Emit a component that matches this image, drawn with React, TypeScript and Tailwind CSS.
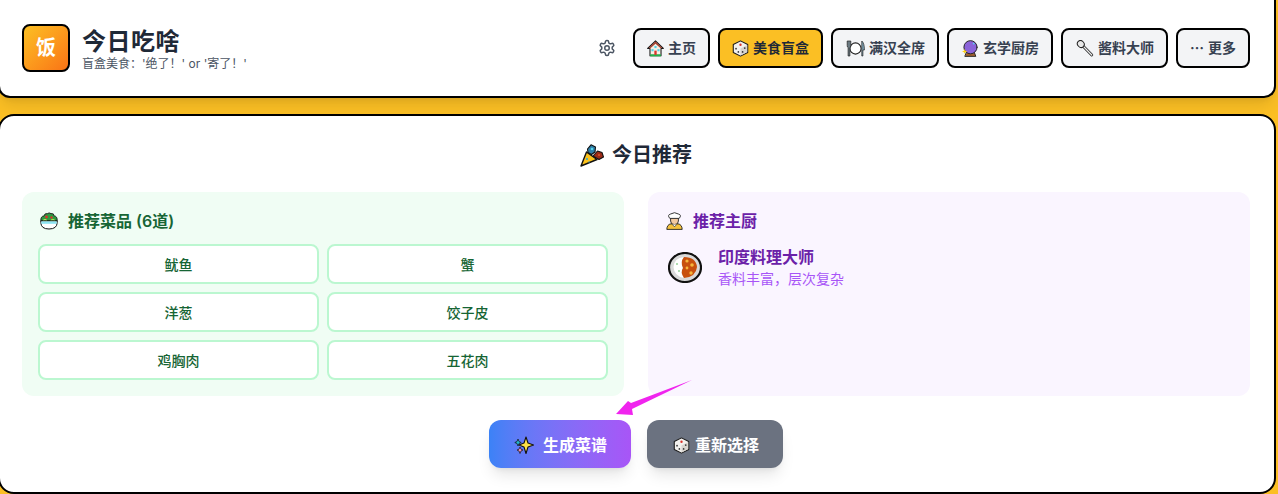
import type { ReactNode } from 'react';

const sans = 'font-["Inter","Noto_Sans_CJK_SC",sans-serif]';

function Glyph({ size = 17, children }: { size?: number; children: ReactNode }) {
  return (
    <svg width={size} height={size} viewBox="0 0 16 16" className="shrink-0" strokeLinejoin="round" strokeLinecap="round">
      {children}
    </svg>
  );
}

function House() {
  return (
    <Glyph>
      <path d="M8 .8 L15.4 8 H13.2 V14.8 H2.8 V8 H.6 Z" fill="#f5efe3" stroke="#1a1a1a" strokeWidth="1" />
      <path d="M8 1.4 L14.4 7.6 L12.8 7.8 L8 3.6 L3.2 7.8 L1.6 7.6 Z" fill="#a5402f" />
      <rect x="3" y="13.4" width="10" height="2" fill="#22b04c" />
      <rect x="6.9" y="10" width="2.2" height="4" fill="#d9342b" />
      <rect x="4.2" y="8.6" width="2" height="2" fill="#4fd2e8" />
      <rect x="9.8" y="8.6" width="2" height="2" fill="#4fd2e8" />
      <rect x="7" y="5.6" width="2" height="2" fill="#4fd2e8" />
    </Glyph>
  );
}

function Dice() {
  return (
    <Glyph>
      <path d="M8 .8 L14.8 4.3 V11.7 L8 15.2 L1.2 11.7 V4.3 Z" fill="#f3f1ee" stroke="#1a1a1a" strokeWidth="1" />
      <path d="M8 8 L14.3 4.8 V11.4 L8 14.7 Z" fill="#d8d4cf" />
      <circle cx="8" cy="4.5" r="1.1" fill="#d9342b" />
      <circle cx="3.8" cy="8.2" r=".8" fill="#333" />
      <circle cx="6" cy="11.2" r=".8" fill="#333" />
      <circle cx="12" cy="7.6" r=".8" fill="#333" />
      <circle cx="10" cy="11.2" r=".8" fill="#333" />
    </Glyph>
  );
}

function Plate() {
  return (
    <svg width="19" height="17" viewBox="0 0 19 17" className="shrink-0">
      <circle cx="9.5" cy="8.5" r="5.6" fill="#fff" stroke="#222" strokeWidth="1.1" />
      <path d="M1.2 1 H4.8 V5.5 Q4.8 7.5 3.9 7.5 V16 H2.1 V7.5 Q1.2 7.5 1.2 5.5 Z" fill="#6b7a82" stroke="#222" strokeWidth=".7" />
      <path d="M15.8 16 V1 Q18.4 3 18.4 10 H16.9 V16 Z" fill="#7fa3b5" stroke="#222" strokeWidth=".7" />
    </svg>
  );
}

function Ball() {
  return (
    <Glyph>
      <path d="M4.5 11.5 H11.5 L13 15.4 H3 Z" fill="#a0602c" stroke="#222" strokeWidth=".9" />
      <circle cx="8" cy="6.8" r="6.2" fill="#8b63d9" stroke="#222" strokeWidth=".9" />
      <circle cx="11" cy="3.4" r=".9" fill="#56d6ec" />
      <path d="M2.5 8.5 L3.2 10.2 L5 10.8 L3.2 11.5 L2.5 13 L1.8 11.5 L0 10.8 L1.8 10.2 Z" fill="#fcd116" />
    </Glyph>
  );
}

function Spoon() {
  return (
    <svg width="18" height="17" viewBox="0 0 18 17" className="shrink-0">
      <path d="M7 6 L15.8 15" stroke="#222" strokeWidth="2.8" strokeLinecap="round" />
      <path d="M7 6 L15.8 15" stroke="#eee" strokeWidth="1.2" strokeLinecap="round" />
      <ellipse cx="4.8" cy="4" rx="3.2" ry="3.6" transform="rotate(-45 4.8 4)" fill="#e8e8e8" stroke="#222" strokeWidth="1" />
    </svg>
  );
}

function Popper() {
  return (
    <svg width="24" height="23" viewBox="0 0 24 23">
      <path d="M1 22 L6.5 8 L17 15.5 Z" fill="#fcc21b" stroke="#111" strokeWidth="1.4" strokeLinejoin="round" />
      <circle cx="7" cy="15" r="1" fill="#2aa7d8" />
      <circle cx="9" cy="18" r=".7" fill="#2aa7d8" />
      <path d="M7.5 5 L11 .8 L15.5 3 L15 8 L11.5 10.5 L8 8.5 Z" fill="#2f7ea8" stroke="#111" strokeWidth="1.1" strokeLinejoin="round" />
      <circle cx="12" cy="5" r="1.3" fill="#56d6ec" />
      <path d="M13 12 L17.5 7 L22 8.5 L23.5 13 L19 15.5 Z" fill="#9c2a16" stroke="#111" strokeWidth="1.1" strokeLinejoin="round" />
      <circle cx="19" cy="11" r="1.1" fill="#d9542b" />
    </svg>
  );
}

function Salad() {
  return (
    <svg width="18" height="18" viewBox="0 0 18 18">
      <path d="M.8 9 Q.6 4 4 4 Q4.5 1 7.5 1.6 Q9 .2 11 1.6 Q14 1 14.2 4 Q17.4 4 17.2 9 Z" fill="#2d9b3f" stroke="#1a1a1a" strokeWidth=".9" />
      <circle cx="6.5" cy="5" r="1.4" fill="#d9342b" />
      <circle cx="11.5" cy="5.5" r="1.2" fill="#d9342b" />
      <path d="M3 8.4 Q5 6 7 8.4 M10.5 8.4 Q13 6 15 8.4" fill="#b9e35a" stroke="#b9e35a" strokeWidth=".8" />
      <path d="M.8 9 H17.2 V10.5 Q17 17 9 17 Q1 17 .8 10.5 Z" fill="#fff" stroke="#111" strokeWidth="1" />
      <rect x="1.3" y="9.4" width="15.4" height="2.4" fill="#8ce4f2" />
    </svg>
  );
}

function Chef() {
  return (
    <svg width="17" height="18" viewBox="0 0 17 18">
      <path d="M.8 17.4 Q1 12.5 5 11.8 H12 Q16 12.5 16.2 17.4 Z" fill="#f6c23e" stroke="#222" strokeWidth=".9" />
      <path d="M4.6 6 H12.4 V9 Q12.4 12.6 8.5 12.6 Q4.6 12.6 4.6 9 Z" fill="#f3c9a0" stroke="#222" strokeWidth=".9" />
      <path d="M3.8 6.4 Q1 3 4.6 2 Q8.5 -.6 12.4 2 Q16 3 13.2 6.4 Z" fill="#fff" stroke="#222" strokeWidth=".9" />
      <path d="M6.2 12.4 L8.5 14.8 L10.8 12.4" fill="#fff" stroke="#222" strokeWidth=".7" />
    </svg>
  );
}

function Curry() {
  return (
    <svg width="34" height="31" viewBox="0 0 34 31">
      <ellipse cx="17" cy="15.5" rx="16" ry="14.5" fill="#d9d9d9" stroke="#111" strokeWidth="2.2" />
      <path d="M16 5 Q6 6 5.5 15 Q6 24 16 26 Q12 20 15 16 Q12 10 16 5 Z" fill="#fff" />
      <path d="M16 5 Q28 5 29 15 Q28 25 16 26 Q12 20 15 16 Q12 10 16 5 Z" fill="#c8500e" />
      <circle cx="19" cy="9" r="1.6" fill="#f6b73c" />
      <circle cx="24" cy="13" r="1.8" fill="#f6b73c" />
      <circle cx="19" cy="16" r="1.4" fill="#f6b73c" />
      <circle cx="23" cy="21" r="1.7" fill="#f6b73c" />
      <circle cx="9" cy="12" r=".8" fill="#4caf50" />
      <circle cx="11" cy="19" r=".8" fill="#4caf50" />
    </svg>
  );
}

function Sparkles() {
  return (
    <svg width="20" height="19" viewBox="0 0 20 19">
      <path d="M12 1 L14 7 L19.5 9 L14 11 L12 17.5 L10 11 L5 9 L10 7 Z" fill="#fde047" stroke="#111" strokeWidth="1.1" strokeLinejoin="round" />
      <path d="M4 3 L5 5.5 L7.2 6.5 L5 7.5 L4 10 L3 7.5 L.8 6.5 L3 5.5 Z" fill="#22b8cf" stroke="#111" strokeWidth=".7" strokeLinejoin="round" />
      <path d="M6 11 L7 13.2 L9 14 L7 15 L6 17.5 L5 15 L3 14 L5 13.2 Z" fill="#f48fb1" stroke="#111" strokeWidth=".7" strokeLinejoin="round" />
    </svg>
  );
}

function Gear() {
  return (
    <svg width="18" height="18" viewBox="0 0 24 24" fill="none" stroke="#4b5563" strokeWidth="2" strokeLinecap="round" strokeLinejoin="round">
      <path d="M12.22 2h-.44a2 2 0 0 0-2 2v.18a2 2 0 0 1-1 1.73l-.43.25a2 2 0 0 1-2 0l-.15-.08a2 2 0 0 0-2.73.73l-.22.38a2 2 0 0 0 .73 2.73l.15.1a2 2 0 0 1 1 1.72v.51a2 2 0 0 1-1 1.74l-.15.09a2 2 0 0 0-.73 2.73l.22.38a2 2 0 0 0 2.73.73l.15-.08a2 2 0 0 1 2 0l.43.25a2 2 0 0 1 1 1.73V20a2 2 0 0 0 2 2h.44a2 2 0 0 0 2-2v-.18a2 2 0 0 1 1-1.73l.43-.25a2 2 0 0 1 2 0l.15.08a2 2 0 0 0 2.73-.73l.22-.39a2 2 0 0 0-.73-2.73l-.15-.08a2 2 0 0 1-1-1.74v-.5a2 2 0 0 1 1-1.74l.15-.09a2 2 0 0 0 .73-2.73l-.22-.38a2 2 0 0 0-2.73-.73l-.15.08a2 2 0 0 1-2 0l-.43-.25a2 2 0 0 1-1-1.73V4a2 2 0 0 0-2-2z" />
      <circle cx="12" cy="12" r="3" />
    </svg>
  );
}

const navItems = [
  { icon: <House />, box: 'w-[17px]', label: '主页' },
  { icon: <Dice />, box: 'w-[17px]', label: '美食盲盒', active: true },
  { icon: <Plate />, box: 'w-[20px]', label: '满汉全席' },
  { icon: <Ball />, box: 'w-[18px]', label: '玄学厨房' },
  { icon: <Spoon />, box: 'w-[19px]', label: '酱料大师' },
  { icon: <span className="text-sm leading-none">⋯</span>, box: 'w-[14px]', label: '更多' },
];

const dishes = ['鱿鱼', '蟹', '洋葱', '饺子皮', '鸡胸肉', '五花肉'];

export default function App() {
  return (
    <div className={`${sans} h-[494px] overflow-hidden bg-[#fbbf24]`}>
      {/* Header */}
      <header className="-ml-0.5 flex h-[98px] w-[1278px] items-center justify-between rounded-b-xl border-x-2 border-b-2 border-black bg-white pr-6 pl-[22px] shadow-lg">
        <div className="flex items-center gap-3">
          <div className="flex h-12 w-12 items-center justify-center rounded-lg border-2 border-black bg-gradient-to-br from-[#fbbf24] to-[#f97316] text-xl font-bold text-white">饭</div>
          <div className="mt-0.5">
            <h1 className="-mb-0.5 text-2xl leading-8 font-bold tracking-[0.5px] text-[#1f2937]">今日吃啥</h1>
            <p className="text-xs leading-4 text-[#4b5563]">盲盒美食：'绝了！' or '寄了！'</p>
          </div>
        </div>
        <nav className="flex items-center gap-2">
          <div className="mr-0.5 flex h-8 w-8 items-center justify-center"><Gear /></div>
          {navItems.map((item) => (
            <button
              key={item.label}
              className={`flex h-10 items-center gap-1 rounded-lg border-2 border-black px-3 text-sm font-semibold ${item.active ? 'bg-[#fbbf24] text-[#1f2937]' : 'bg-[#f3f4f6] text-[#374151]'}`}
            >
              <span className={`flex justify-center ${item.box}`}>{item.icon}</span>
              {item.label}
            </button>
          ))}
        </nav>
      </header>

      {/* Main card */}
      <main className="-ml-0.5 mt-4 h-[380px] w-[1278px] rounded-2xl border-2 border-black bg-white pt-[25px] pr-6 pl-[22px]">
        <h2 className="flex items-center justify-center gap-2 text-xl leading-7 font-bold text-[#1f2937]">
          <Popper />今日推荐
        </h2>
        <div className="mt-[23px] grid grid-cols-2 gap-6">
          <section className="h-[204px] rounded-xl bg-[#f0fdf4] px-4 pt-4">
            <h3 className="flex items-center gap-2 text-base leading-[26px] font-semibold text-[#166534]">
              <span className="flex w-[22px] justify-center"><Salad /></span>推荐菜品 (6道)
            </h3>
            <div className="mt-2.5 grid grid-cols-2 gap-2">
              {dishes.map((dish) => (
                <div key={dish} className="flex h-10 items-center justify-center rounded-lg border-2 border-[#bbf7d0] bg-white pt-0.5 text-sm font-medium text-[#166534]">{dish}</div>
              ))}
            </div>
          </section>
          <section className="h-[204px] rounded-xl bg-[#faf5ff] px-4 pt-4">
            <h3 className="flex items-center gap-2 text-base leading-[26px] font-semibold text-[#6b21a8]">
              <span className="flex w-[21px] justify-center"><Chef /></span>推荐主厨
            </h3>
            <div className="mt-[11px] flex items-center gap-3">
              <span className="flex w-[42px] justify-center"><Curry /></span>
              <div>
                <div className="text-base leading-6 font-semibold text-[#6b21a8]">印度料理大师</div>
                <div className="text-sm leading-5 text-[#a855f7]">香料丰富，层次复杂</div>
              </div>
            </div>
          </section>
        </div>

        {/* Actions */}
        <div className="mt-6 flex justify-center gap-4">
          <button className="relative flex h-12 items-center gap-2 rounded-xl bg-gradient-to-r from-[#3b82f6] to-[#a855f7] px-6 pt-0.5 text-base font-semibold text-white shadow-lg">
            <span className="flex w-[22px] justify-center"><Sparkles /></span>生成菜谱
            {/* Pink annotation arrow */}
            <svg className="absolute -top-[41px] left-[126px]" width="78" height="37" viewBox="0 0 78 37">
              <path d="M77 1 L16 24 L13 22 L1 35 L18 36 L17 30 Z" fill="#f024ee" />
            </svg>
          </button>
          <button className="flex h-12 items-center gap-1 rounded-xl bg-[#6b7280] px-6 pt-0.5 text-base font-semibold text-white shadow-lg">
            <span className="flex w-5 justify-center"><Dice /></span>重新选择
          </button>
        </div>
      </main>
    </div>
  );
}
